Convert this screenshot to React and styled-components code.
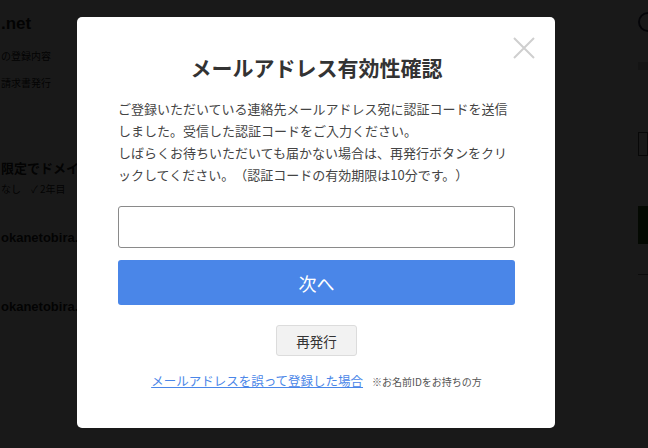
import React, { useState } from 'react';
import styled, { createGlobalStyle } from 'styled-components';

const GlobalStyle = createGlobalStyle`
  html, body {
    margin: 0;
    padding: 0;
    background: #ffffff;
  }
  body {
    font-family: "Noto Sans CJK JP", "Noto Sans", sans-serif;
    overflow: hidden;
    text-spacing-trim: space-all;
  }
`;

export default function App() {
    const [code, setCode] = useState('');

    return (
        <>
            <GlobalStyle />
            <Page>
                <SideCol>
                    <SiteName>.net</SiteName>
                    <SmallLine>の登録内容</SmallLine>
                    <SmallLine>請求書発行</SmallLine>
                    <Promo>限定でドメイン</Promo>
                    <SmallLine>なし　✓ 2年目</SmallLine>
                    <Domain>okanetobira.net</Domain>
                    <Domain>okanetobira.net</Domain>
                </SideCol>
                <RightCol>
                    <Avatar />
                    <Tag />
                    <Box />
                    <GreenBox />
                    <Rule />
                </RightCol>
            </Page>

            <Overlay>
                <Modal>
                    <CloseButton aria-label='閉じる'>
                        <svg width='22' height='22' viewBox='0 0 22 22'>
                            <path d='M1 1 L21 21 M21 1 L1 21' stroke='#cfcfcf' strokeWidth='2' fill='none'/>
                        </svg>
                    </CloseButton>

                    <Title>メールアドレス有効性確認</Title>

                    <Message>
                        ご登録いただいている連絡先メールアドレス宛に認証コードを送信しました。受信した認証コードをご入力ください。
                        <br/>
                        しばらくお待ちいただいても届かない場合は、再発行ボタンをクリックしてください。（認証コードの有効期限は10分です。）
                    </Message>

                    <CodeInput value={code} onChange={e => setCode(e.target.value)} />

                    <NextButton>次へ</NextButton>

                    <Center>
                        <ReissueButton>再発行</ReissueButton>
                    </Center>

                    <Footer>
                        <WrongLink href='#'>メールアドレスを誤って登録した場合</WrongLink>
                        <Note>※お名前IDをお持ちの方</Note>
                    </Footer>
                </Modal>
            </Overlay>
        </>
    )
}

const Page = styled.div`
    height: 448px;
    display: flex;
    justify-content: space-between;
    color: #222;
`

const SideCol = styled.div`
    display: flex;
    flex-direction: column;
    padding-top: 14px;
    padding-left: 1px;
    width: 120px;
`

const SiteName = styled.div`
    font-size: 17px;
    font-weight: bold;
    font-family: "Liberation Sans", sans-serif;
    margin-bottom: 14px;
`

const SmallLine = styled.div`
    font-size: 10px;
    margin-bottom: 12px;
    white-space: nowrap;
`

const Promo = styled.div`
    font-size: 13px;
    font-weight: bold;
    margin-top: 56px;
    margin-bottom: 4px;
    white-space: nowrap;
`

const Domain = styled.div`
    font-size: 13px;
    font-weight: bold;
    font-family: "Liberation Sans", sans-serif;
    margin-top: 22px;
    margin-bottom: 32px;
    white-space: nowrap;
`

const RightCol = styled.div`
    width: 10px;
    display: flex;
    flex-direction: column;
    padding-top: 12px;
`

const Avatar = styled.div`
    width: 16px;
    height: 16px;
    border-radius: 50%;
    border: 2px solid #335;
`

const Tag = styled.div`
    height: 8px;
    margin-top: 30px;
    background: #ccc;
`

const Box = styled.div`
    height: 22px;
    border: 1px solid #555;
    margin-top: 62px;
`

const GreenBox = styled.div`
    height: 38px;
    background: #2a5d1a;
    margin-top: 50px;
`

const Rule = styled.div`
    height: 1px;
    background: #777;
    margin-top: 30px;
`

const Overlay = styled.div`
    position: fixed;
    inset: 0;
    background: rgba(0, 0, 0, 0.9);
    display: flex;
    align-items: center;
    justify-content: center;
    padding-right: 16px;
    padding-bottom: 3px;
    box-sizing: border-box;
`

const Modal = styled.div`
    position: relative;
    width: 478px;
    height: 411px;
    box-sizing: border-box;
    background: #ffffff;
    border-radius: 5px;
    padding: 35px 40px 0 41px;
    display: flex;
    flex-direction: column;
`

const CloseButton = styled.button`
    position: absolute;
    top: 19px;
    right: 19px;
    width: 24px;
    height: 24px;
    padding: 0;
    border: none;
    background: transparent;
    display: flex;
    align-items: center;
    justify-content: center;
    cursor: pointer;
`

const Title = styled.h2`
    margin: 0;
    text-align: center;
    font-size: 21px;
    line-height: 30px;
    font-weight: bold;
    color: #333;
`

const Message = styled.p`
    margin: 16px 0 0;
    font-size: 13px;
    line-height: 22px;
    color: #444;
`

const CodeInput = styled.input`
    margin-top: 20px;
    height: 42px;
    width: 100%;
    box-sizing: border-box;
    border: 1px solid #8a8a8a;
    border-radius: 3px;
    padding: 0 10px;
    font-size: 16px;
    outline: none;
`

const NextButton = styled.button`
    margin-top: 12px;
    height: 45px;
    width: 100%;
    border: none;
    border-radius: 3px;
    background-color: #4a86e8;
    color: #ffffff;
    font-family: inherit;
    font-size: 18px;
    cursor: pointer;
`

const Center = styled.div`
    display: flex;
    justify-content: center;
    margin-top: 20px;
`

const ReissueButton = styled.button`
    width: 81px;
    height: 31px;
    border: 1px solid #dcdcdc;
    border-radius: 3px;
    background-color: #f2f2f2;
    color: #333;
    font-family: inherit;
    font-size: 13.5px;
    cursor: pointer;
`

const Footer = styled.div`
    margin-top: 15px;
    display: flex;
    justify-content: center;
    align-items: baseline;
    line-height: 20px;
`

const WrongLink = styled.a`
    font-size: 12.5px;
    color: #4a86e8;
    text-decoration: underline;
`

const Note = styled.span`
    margin-left: 9px;
    font-size: 10px;
    color: #555;
`
